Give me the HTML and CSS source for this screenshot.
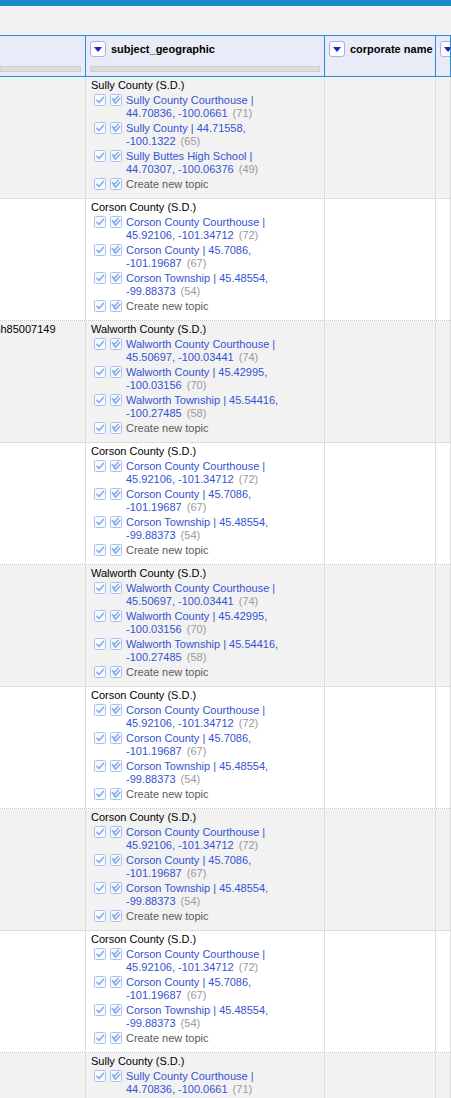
FILE: index.html
```html
<!DOCTYPE html>
<html>
<head>
<meta charset="utf-8">
<link rel="stylesheet" href="styles.css">
</head>
<body>
<div class="topbar"></div>
<div class="toolbar"></div>
<div class="table">
  <div class="row head">
    <div class="hcell hfirst"><div class="htop"></div><div class="filter"></div></div>
    <div class="hcell"><div class="htop"><span class="dd"></span><span class="hname">subject_geographic</span></div><div class="filter"></div></div>
    <div class="hcell"><div class="htop"><span class="dd"></span><span class="hname">corporate name</span></div></div>
    <div class="hcell"><div class="htop"><span class="dd"></span></div></div>
  </div>

  <div class="row odd">
    <div class="cell c1"></div>
    <div class="cell c2">
      <div class="title">Sully County (S.D.)</div>
      <div class="cand"><svg class="ic" viewBox="0 0 12 12"><rect x=".5" y=".5" width="11" height="11" rx="1"/><path d="M2.8 6.2 L5 8.4 L9.4 3.4"/></svg><svg class="ic" viewBox="0 0 12 12"><rect x=".5" y=".5" width="11" height="11" rx="1"/><path d="M2.3 4.6 L4.3 6.6 L8.2 2.3"/><path d="M3.6 7.2 L5.6 9.2 L9.8 4.6"/></svg><span class="txt"><a>Sully County Courthouse | 44.70836, -100.0661</a> <span class="cnt">(71)</span></span></div>
      <div class="cand"><svg class="ic" viewBox="0 0 12 12"><rect x=".5" y=".5" width="11" height="11" rx="1"/><path d="M2.8 6.2 L5 8.4 L9.4 3.4"/></svg><svg class="ic" viewBox="0 0 12 12"><rect x=".5" y=".5" width="11" height="11" rx="1"/><path d="M2.3 4.6 L4.3 6.6 L8.2 2.3"/><path d="M3.6 7.2 L5.6 9.2 L9.8 4.6"/></svg><span class="txt"><a>Sully County | 44.71558, -100.1322</a> <span class="cnt">(65)</span></span></div>
      <div class="cand"><svg class="ic" viewBox="0 0 12 12"><rect x=".5" y=".5" width="11" height="11" rx="1"/><path d="M2.8 6.2 L5 8.4 L9.4 3.4"/></svg><svg class="ic" viewBox="0 0 12 12"><rect x=".5" y=".5" width="11" height="11" rx="1"/><path d="M2.3 4.6 L4.3 6.6 L8.2 2.3"/><path d="M3.6 7.2 L5.6 9.2 L9.8 4.6"/></svg><span class="txt"><a>Sully Buttes High School | 44.70307, -100.06376</a> <span class="cnt">(49)</span></span></div>
      <div class="cand"><svg class="ic" viewBox="0 0 12 12"><rect x=".5" y=".5" width="11" height="11" rx="1"/><path d="M2.8 6.2 L5 8.4 L9.4 3.4"/></svg><svg class="ic" viewBox="0 0 12 12"><rect x=".5" y=".5" width="11" height="11" rx="1"/><path d="M2.3 4.6 L4.3 6.6 L8.2 2.3"/><path d="M3.6 7.2 L5.6 9.2 L9.8 4.6"/></svg><span class="txt new">Create new topic</span></div>
    </div>
    <div class="cell"></div>
    <div class="cell"></div>
  </div>

  <div class="row">
    <div class="cell c1"></div>
    <div class="cell c2">
      <div class="title">Corson County (S.D.)</div>
      <div class="cand"><svg class="ic" viewBox="0 0 12 12"><rect x=".5" y=".5" width="11" height="11" rx="1"/><path d="M2.8 6.2 L5 8.4 L9.4 3.4"/></svg><svg class="ic" viewBox="0 0 12 12"><rect x=".5" y=".5" width="11" height="11" rx="1"/><path d="M2.3 4.6 L4.3 6.6 L8.2 2.3"/><path d="M3.6 7.2 L5.6 9.2 L9.8 4.6"/></svg><span class="txt"><a>Corson County Courthouse | 45.92106, -101.34712</a> <span class="cnt">(72)</span></span></div>
      <div class="cand"><svg class="ic" viewBox="0 0 12 12"><rect x=".5" y=".5" width="11" height="11" rx="1"/><path d="M2.8 6.2 L5 8.4 L9.4 3.4"/></svg><svg class="ic" viewBox="0 0 12 12"><rect x=".5" y=".5" width="11" height="11" rx="1"/><path d="M2.3 4.6 L4.3 6.6 L8.2 2.3"/><path d="M3.6 7.2 L5.6 9.2 L9.8 4.6"/></svg><span class="txt"><a>Corson County | 45.7086, -101.19687</a> <span class="cnt">(67)</span></span></div>
      <div class="cand"><svg class="ic" viewBox="0 0 12 12"><rect x=".5" y=".5" width="11" height="11" rx="1"/><path d="M2.8 6.2 L5 8.4 L9.4 3.4"/></svg><svg class="ic" viewBox="0 0 12 12"><rect x=".5" y=".5" width="11" height="11" rx="1"/><path d="M2.3 4.6 L4.3 6.6 L8.2 2.3"/><path d="M3.6 7.2 L5.6 9.2 L9.8 4.6"/></svg><span class="txt"><a>Corson Township | 45.48554, -99.88373</a> <span class="cnt">(54)</span></span></div>
      <div class="cand"><svg class="ic" viewBox="0 0 12 12"><rect x=".5" y=".5" width="11" height="11" rx="1"/><path d="M2.8 6.2 L5 8.4 L9.4 3.4"/></svg><svg class="ic" viewBox="0 0 12 12"><rect x=".5" y=".5" width="11" height="11" rx="1"/><path d="M2.3 4.6 L4.3 6.6 L8.2 2.3"/><path d="M3.6 7.2 L5.6 9.2 L9.8 4.6"/></svg><span class="txt new">Create new topic</span></div>
    </div>
    <div class="cell"></div>
    <div class="cell"></div>
  </div>

  <div class="row odd">
    <div class="cell c1"><span class="id">sh85007149</span></div>
    <div class="cell c2">
      <div class="title">Walworth County (S.D.)</div>
      <div class="cand"><svg class="ic" viewBox="0 0 12 12"><rect x=".5" y=".5" width="11" height="11" rx="1"/><path d="M2.8 6.2 L5 8.4 L9.4 3.4"/></svg><svg class="ic" viewBox="0 0 12 12"><rect x=".5" y=".5" width="11" height="11" rx="1"/><path d="M2.3 4.6 L4.3 6.6 L8.2 2.3"/><path d="M3.6 7.2 L5.6 9.2 L9.8 4.6"/></svg><span class="txt"><a>Walworth County Courthouse | 45.50697, -100.03441</a> <span class="cnt">(74)</span></span></div>
      <div class="cand"><svg class="ic" viewBox="0 0 12 12"><rect x=".5" y=".5" width="11" height="11" rx="1"/><path d="M2.8 6.2 L5 8.4 L9.4 3.4"/></svg><svg class="ic" viewBox="0 0 12 12"><rect x=".5" y=".5" width="11" height="11" rx="1"/><path d="M2.3 4.6 L4.3 6.6 L8.2 2.3"/><path d="M3.6 7.2 L5.6 9.2 L9.8 4.6"/></svg><span class="txt"><a>Walworth County | 45.42995, -100.03156</a> <span class="cnt">(70)</span></span></div>
      <div class="cand"><svg class="ic" viewBox="0 0 12 12"><rect x=".5" y=".5" width="11" height="11" rx="1"/><path d="M2.8 6.2 L5 8.4 L9.4 3.4"/></svg><svg class="ic" viewBox="0 0 12 12"><rect x=".5" y=".5" width="11" height="11" rx="1"/><path d="M2.3 4.6 L4.3 6.6 L8.2 2.3"/><path d="M3.6 7.2 L5.6 9.2 L9.8 4.6"/></svg><span class="txt"><a>Walworth Township | 45.54416, -100.27485</a> <span class="cnt">(58)</span></span></div>
      <div class="cand"><svg class="ic" viewBox="0 0 12 12"><rect x=".5" y=".5" width="11" height="11" rx="1"/><path d="M2.8 6.2 L5 8.4 L9.4 3.4"/></svg><svg class="ic" viewBox="0 0 12 12"><rect x=".5" y=".5" width="11" height="11" rx="1"/><path d="M2.3 4.6 L4.3 6.6 L8.2 2.3"/><path d="M3.6 7.2 L5.6 9.2 L9.8 4.6"/></svg><span class="txt new">Create new topic</span></div>
    </div>
    <div class="cell"></div>
    <div class="cell"></div>
  </div>

  <div class="row">
    <div class="cell c1"></div>
    <div class="cell c2">
      <div class="title">Corson County (S.D.)</div>
      <div class="cand"><svg class="ic" viewBox="0 0 12 12"><rect x=".5" y=".5" width="11" height="11" rx="1"/><path d="M2.8 6.2 L5 8.4 L9.4 3.4"/></svg><svg class="ic" viewBox="0 0 12 12"><rect x=".5" y=".5" width="11" height="11" rx="1"/><path d="M2.3 4.6 L4.3 6.6 L8.2 2.3"/><path d="M3.6 7.2 L5.6 9.2 L9.8 4.6"/></svg><span class="txt"><a>Corson County Courthouse | 45.92106, -101.34712</a> <span class="cnt">(72)</span></span></div>
      <div class="cand"><svg class="ic" viewBox="0 0 12 12"><rect x=".5" y=".5" width="11" height="11" rx="1"/><path d="M2.8 6.2 L5 8.4 L9.4 3.4"/></svg><svg class="ic" viewBox="0 0 12 12"><rect x=".5" y=".5" width="11" height="11" rx="1"/><path d="M2.3 4.6 L4.3 6.6 L8.2 2.3"/><path d="M3.6 7.2 L5.6 9.2 L9.8 4.6"/></svg><span class="txt"><a>Corson County | 45.7086, -101.19687</a> <span class="cnt">(67)</span></span></div>
      <div class="cand"><svg class="ic" viewBox="0 0 12 12"><rect x=".5" y=".5" width="11" height="11" rx="1"/><path d="M2.8 6.2 L5 8.4 L9.4 3.4"/></svg><svg class="ic" viewBox="0 0 12 12"><rect x=".5" y=".5" width="11" height="11" rx="1"/><path d="M2.3 4.6 L4.3 6.6 L8.2 2.3"/><path d="M3.6 7.2 L5.6 9.2 L9.8 4.6"/></svg><span class="txt"><a>Corson Township | 45.48554, -99.88373</a> <span class="cnt">(54)</span></span></div>
      <div class="cand"><svg class="ic" viewBox="0 0 12 12"><rect x=".5" y=".5" width="11" height="11" rx="1"/><path d="M2.8 6.2 L5 8.4 L9.4 3.4"/></svg><svg class="ic" viewBox="0 0 12 12"><rect x=".5" y=".5" width="11" height="11" rx="1"/><path d="M2.3 4.6 L4.3 6.6 L8.2 2.3"/><path d="M3.6 7.2 L5.6 9.2 L9.8 4.6"/></svg><span class="txt new">Create new topic</span></div>
    </div>
    <div class="cell"></div>
    <div class="cell"></div>
  </div>

  <div class="row odd">
    <div class="cell c1"></div>
    <div class="cell c2">
      <div class="title">Walworth County (S.D.)</div>
      <div class="cand"><svg class="ic" viewBox="0 0 12 12"><rect x=".5" y=".5" width="11" height="11" rx="1"/><path d="M2.8 6.2 L5 8.4 L9.4 3.4"/></svg><svg class="ic" viewBox="0 0 12 12"><rect x=".5" y=".5" width="11" height="11" rx="1"/><path d="M2.3 4.6 L4.3 6.6 L8.2 2.3"/><path d="M3.6 7.2 L5.6 9.2 L9.8 4.6"/></svg><span class="txt"><a>Walworth County Courthouse | 45.50697, -100.03441</a> <span class="cnt">(74)</span></span></div>
      <div class="cand"><svg class="ic" viewBox="0 0 12 12"><rect x=".5" y=".5" width="11" height="11" rx="1"/><path d="M2.8 6.2 L5 8.4 L9.4 3.4"/></svg><svg class="ic" viewBox="0 0 12 12"><rect x=".5" y=".5" width="11" height="11" rx="1"/><path d="M2.3 4.6 L4.3 6.6 L8.2 2.3"/><path d="M3.6 7.2 L5.6 9.2 L9.8 4.6"/></svg><span class="txt"><a>Walworth County | 45.42995, -100.03156</a> <span class="cnt">(70)</span></span></div>
      <div class="cand"><svg class="ic" viewBox="0 0 12 12"><rect x=".5" y=".5" width="11" height="11" rx="1"/><path d="M2.8 6.2 L5 8.4 L9.4 3.4"/></svg><svg class="ic" viewBox="0 0 12 12"><rect x=".5" y=".5" width="11" height="11" rx="1"/><path d="M2.3 4.6 L4.3 6.6 L8.2 2.3"/><path d="M3.6 7.2 L5.6 9.2 L9.8 4.6"/></svg><span class="txt"><a>Walworth Township | 45.54416, -100.27485</a> <span class="cnt">(58)</span></span></div>
      <div class="cand"><svg class="ic" viewBox="0 0 12 12"><rect x=".5" y=".5" width="11" height="11" rx="1"/><path d="M2.8 6.2 L5 8.4 L9.4 3.4"/></svg><svg class="ic" viewBox="0 0 12 12"><rect x=".5" y=".5" width="11" height="11" rx="1"/><path d="M2.3 4.6 L4.3 6.6 L8.2 2.3"/><path d="M3.6 7.2 L5.6 9.2 L9.8 4.6"/></svg><span class="txt new">Create new topic</span></div>
    </div>
    <div class="cell"></div>
    <div class="cell"></div>
  </div>

  <div class="row">
    <div class="cell c1"></div>
    <div class="cell c2">
      <div class="title">Corson County (S.D.)</div>
      <div class="cand"><svg class="ic" viewBox="0 0 12 12"><rect x=".5" y=".5" width="11" height="11" rx="1"/><path d="M2.8 6.2 L5 8.4 L9.4 3.4"/></svg><svg class="ic" viewBox="0 0 12 12"><rect x=".5" y=".5" width="11" height="11" rx="1"/><path d="M2.3 4.6 L4.3 6.6 L8.2 2.3"/><path d="M3.6 7.2 L5.6 9.2 L9.8 4.6"/></svg><span class="txt"><a>Corson County Courthouse | 45.92106, -101.34712</a> <span class="cnt">(72)</span></span></div>
      <div class="cand"><svg class="ic" viewBox="0 0 12 12"><rect x=".5" y=".5" width="11" height="11" rx="1"/><path d="M2.8 6.2 L5 8.4 L9.4 3.4"/></svg><svg class="ic" viewBox="0 0 12 12"><rect x=".5" y=".5" width="11" height="11" rx="1"/><path d="M2.3 4.6 L4.3 6.6 L8.2 2.3"/><path d="M3.6 7.2 L5.6 9.2 L9.8 4.6"/></svg><span class="txt"><a>Corson County | 45.7086, -101.19687</a> <span class="cnt">(67)</span></span></div>
      <div class="cand"><svg class="ic" viewBox="0 0 12 12"><rect x=".5" y=".5" width="11" height="11" rx="1"/><path d="M2.8 6.2 L5 8.4 L9.4 3.4"/></svg><svg class="ic" viewBox="0 0 12 12"><rect x=".5" y=".5" width="11" height="11" rx="1"/><path d="M2.3 4.6 L4.3 6.6 L8.2 2.3"/><path d="M3.6 7.2 L5.6 9.2 L9.8 4.6"/></svg><span class="txt"><a>Corson Township | 45.48554, -99.88373</a> <span class="cnt">(54)</span></span></div>
      <div class="cand"><svg class="ic" viewBox="0 0 12 12"><rect x=".5" y=".5" width="11" height="11" rx="1"/><path d="M2.8 6.2 L5 8.4 L9.4 3.4"/></svg><svg class="ic" viewBox="0 0 12 12"><rect x=".5" y=".5" width="11" height="11" rx="1"/><path d="M2.3 4.6 L4.3 6.6 L8.2 2.3"/><path d="M3.6 7.2 L5.6 9.2 L9.8 4.6"/></svg><span class="txt new">Create new topic</span></div>
    </div>
    <div class="cell"></div>
    <div class="cell"></div>
  </div>

  <div class="row odd">
    <div class="cell c1"></div>
    <div class="cell c2">
      <div class="title">Corson County (S.D.)</div>
      <div class="cand"><svg class="ic" viewBox="0 0 12 12"><rect x=".5" y=".5" width="11" height="11" rx="1"/><path d="M2.8 6.2 L5 8.4 L9.4 3.4"/></svg><svg class="ic" viewBox="0 0 12 12"><rect x=".5" y=".5" width="11" height="11" rx="1"/><path d="M2.3 4.6 L4.3 6.6 L8.2 2.3"/><path d="M3.6 7.2 L5.6 9.2 L9.8 4.6"/></svg><span class="txt"><a>Corson County Courthouse | 45.92106, -101.34712</a> <span class="cnt">(72)</span></span></div>
      <div class="cand"><svg class="ic" viewBox="0 0 12 12"><rect x=".5" y=".5" width="11" height="11" rx="1"/><path d="M2.8 6.2 L5 8.4 L9.4 3.4"/></svg><svg class="ic" viewBox="0 0 12 12"><rect x=".5" y=".5" width="11" height="11" rx="1"/><path d="M2.3 4.6 L4.3 6.6 L8.2 2.3"/><path d="M3.6 7.2 L5.6 9.2 L9.8 4.6"/></svg><span class="txt"><a>Corson County | 45.7086, -101.19687</a> <span class="cnt">(67)</span></span></div>
      <div class="cand"><svg class="ic" viewBox="0 0 12 12"><rect x=".5" y=".5" width="11" height="11" rx="1"/><path d="M2.8 6.2 L5 8.4 L9.4 3.4"/></svg><svg class="ic" viewBox="0 0 12 12"><rect x=".5" y=".5" width="11" height="11" rx="1"/><path d="M2.3 4.6 L4.3 6.6 L8.2 2.3"/><path d="M3.6 7.2 L5.6 9.2 L9.8 4.6"/></svg><span class="txt"><a>Corson Township | 45.48554, -99.88373</a> <span class="cnt">(54)</span></span></div>
      <div class="cand"><svg class="ic" viewBox="0 0 12 12"><rect x=".5" y=".5" width="11" height="11" rx="1"/><path d="M2.8 6.2 L5 8.4 L9.4 3.4"/></svg><svg class="ic" viewBox="0 0 12 12"><rect x=".5" y=".5" width="11" height="11" rx="1"/><path d="M2.3 4.6 L4.3 6.6 L8.2 2.3"/><path d="M3.6 7.2 L5.6 9.2 L9.8 4.6"/></svg><span class="txt new">Create new topic</span></div>
    </div>
    <div class="cell"></div>
    <div class="cell"></div>
  </div>

  <div class="row">
    <div class="cell c1"></div>
    <div class="cell c2">
      <div class="title">Corson County (S.D.)</div>
      <div class="cand"><svg class="ic" viewBox="0 0 12 12"><rect x=".5" y=".5" width="11" height="11" rx="1"/><path d="M2.8 6.2 L5 8.4 L9.4 3.4"/></svg><svg class="ic" viewBox="0 0 12 12"><rect x=".5" y=".5" width="11" height="11" rx="1"/><path d="M2.3 4.6 L4.3 6.6 L8.2 2.3"/><path d="M3.6 7.2 L5.6 9.2 L9.8 4.6"/></svg><span class="txt"><a>Corson County Courthouse | 45.92106, -101.34712</a> <span class="cnt">(72)</span></span></div>
      <div class="cand"><svg class="ic" viewBox="0 0 12 12"><rect x=".5" y=".5" width="11" height="11" rx="1"/><path d="M2.8 6.2 L5 8.4 L9.4 3.4"/></svg><svg class="ic" viewBox="0 0 12 12"><rect x=".5" y=".5" width="11" height="11" rx="1"/><path d="M2.3 4.6 L4.3 6.6 L8.2 2.3"/><path d="M3.6 7.2 L5.6 9.2 L9.8 4.6"/></svg><span class="txt"><a>Corson County | 45.7086, -101.19687</a> <span class="cnt">(67)</span></span></div>
      <div class="cand"><svg class="ic" viewBox="0 0 12 12"><rect x=".5" y=".5" width="11" height="11" rx="1"/><path d="M2.8 6.2 L5 8.4 L9.4 3.4"/></svg><svg class="ic" viewBox="0 0 12 12"><rect x=".5" y=".5" width="11" height="11" rx="1"/><path d="M2.3 4.6 L4.3 6.6 L8.2 2.3"/><path d="M3.6 7.2 L5.6 9.2 L9.8 4.6"/></svg><span class="txt"><a>Corson Township | 45.48554, -99.88373</a> <span class="cnt">(54)</span></span></div>
      <div class="cand"><svg class="ic" viewBox="0 0 12 12"><rect x=".5" y=".5" width="11" height="11" rx="1"/><path d="M2.8 6.2 L5 8.4 L9.4 3.4"/></svg><svg class="ic" viewBox="0 0 12 12"><rect x=".5" y=".5" width="11" height="11" rx="1"/><path d="M2.3 4.6 L4.3 6.6 L8.2 2.3"/><path d="M3.6 7.2 L5.6 9.2 L9.8 4.6"/></svg><span class="txt new">Create new topic</span></div>
    </div>
    <div class="cell"></div>
    <div class="cell"></div>
  </div>

  <div class="row odd">
    <div class="cell c1"></div>
    <div class="cell c2">
      <div class="title">Sully County (S.D.)</div>
      <div class="cand"><svg class="ic" viewBox="0 0 12 12"><rect x=".5" y=".5" width="11" height="11" rx="1"/><path d="M2.8 6.2 L5 8.4 L9.4 3.4"/></svg><svg class="ic" viewBox="0 0 12 12"><rect x=".5" y=".5" width="11" height="11" rx="1"/><path d="M2.3 4.6 L4.3 6.6 L8.2 2.3"/><path d="M3.6 7.2 L5.6 9.2 L9.8 4.6"/></svg><span class="txt"><a>Sully County Courthouse | 44.70836, -100.0661</a> <span class="cnt">(71)</span></span></div>
      <div class="cand"><svg class="ic" viewBox="0 0 12 12"><rect x=".5" y=".5" width="11" height="11" rx="1"/><path d="M2.8 6.2 L5 8.4 L9.4 3.4"/></svg><svg class="ic" viewBox="0 0 12 12"><rect x=".5" y=".5" width="11" height="11" rx="1"/><path d="M2.3 4.6 L4.3 6.6 L8.2 2.3"/><path d="M3.6 7.2 L5.6 9.2 L9.8 4.6"/></svg><span class="txt"><a>Sully County | 44.71558, -100.1322</a> <span class="cnt">(65)</span></span></div>
      <div class="cand"><svg class="ic" viewBox="0 0 12 12"><rect x=".5" y=".5" width="11" height="11" rx="1"/><path d="M2.8 6.2 L5 8.4 L9.4 3.4"/></svg><svg class="ic" viewBox="0 0 12 12"><rect x=".5" y=".5" width="11" height="11" rx="1"/><path d="M2.3 4.6 L4.3 6.6 L8.2 2.3"/><path d="M3.6 7.2 L5.6 9.2 L9.8 4.6"/></svg><span class="txt"><a>Sully Buttes High School | 44.70307, -100.06376</a> <span class="cnt">(49)</span></span></div>
      <div class="cand"><svg class="ic" viewBox="0 0 12 12"><rect x=".5" y=".5" width="11" height="11" rx="1"/><path d="M2.8 6.2 L5 8.4 L9.4 3.4"/></svg><svg class="ic" viewBox="0 0 12 12"><rect x=".5" y=".5" width="11" height="11" rx="1"/><path d="M2.3 4.6 L4.3 6.6 L8.2 2.3"/><path d="M3.6 7.2 L5.6 9.2 L9.8 4.6"/></svg><span class="txt new">Create new topic</span></div>
    </div>
    <div class="cell"></div>
    <div class="cell"></div>
  </div>
</div>
</body>
</html>
```

FILE: styles.css
```css
html, body {
  margin: 0;
  padding: 0;
  overflow: hidden;
  background: #fff;
  font-family: "Liberation Sans", Arial, Helvetica, sans-serif;
  font-size: 11px;
  color: #000;
}
.topbar {
  height: 6px;
  background: #1a89cc;
}
.toolbar {
  height: 29px;
  background: #f2f2f2;
}
.table {
  width: 451px;
  overflow: hidden;
}
.row {
  display: grid;
  grid-template-columns: 86px 239px 111px 1fr;
  border-bottom: 1px dotted #c8c8c8;
  background: #fff;
}
.row.odd {
  background: #f2f2f2;
}
.row.head {
  background: #e9ecf8;
  border-top: 1px solid #2b8fd5;
  border-bottom: 1px solid #2b8fd5;
  height: 40px;
}
.hcell {
  box-sizing: border-box;
  border-right: 1px solid #2b8fd5;
  padding: 5px 4px 0 4px;
  white-space: nowrap;
  overflow: hidden;
}
.hfirst {
  padding-left: 0;
}
.htop {
  display: flex;
  align-items: center;
  gap: 5px;
  height: 16px;
}
.dd {
  box-sizing: border-box;
  flex: none;
  width: 16px;
  height: 16px;
  background: #fff;
  border: 1px solid #a9b0ec;
  border-radius: 3px;
  display: flex;
  align-items: center;
  justify-content: center;
}
.dd::after {
  content: "";
  width: 0;
  height: 0;
  border-left: 4px solid transparent;
  border-right: 4px solid transparent;
  border-top: 5px solid #1f23c4;
  margin-top: 1px;
}
.hname {
  font-weight: bold;
  color: #000;
}
.filter {
  box-sizing: border-box;
  height: 6px;
  margin-top: 9px;
  background: #dcdcdc;
  border: 1px solid #cfcfcf;
}
.cell {
  box-sizing: border-box;
  border-right: 1px solid #dcdcdc;
  padding: 2px 5px 7px 5px;
  line-height: 13px;
  overflow: hidden;
}
.c1 {
  padding-left: 0;
}
.id {
  display: block;
  margin-left: -5px;
  white-space: nowrap;
}
.title {
  line-height: 13px;
}
.cand {
  display: flex;
  align-items: flex-start;
  margin-top: 2px;
  padding-left: 3px;
}
.ic {
  flex: none;
  width: 12px;
  height: 12px;
  margin-right: 4px;
}
.ic rect {
  fill: #f7faff;
  stroke: #a8c2ee;
  stroke-width: 1;
}
.ic path {
  fill: none;
  stroke: #86aae8;
  stroke-width: 1.5;
  stroke-linecap: round;
  stroke-linejoin: round;
}
.txt {
  max-width: 166px;
}
.txt a {
  color: #3552d2;
}
.cnt {
  color: #9a9a9a;
  margin-left: 2px;
}
.new {
  color: #5c5c5c;
}
```
